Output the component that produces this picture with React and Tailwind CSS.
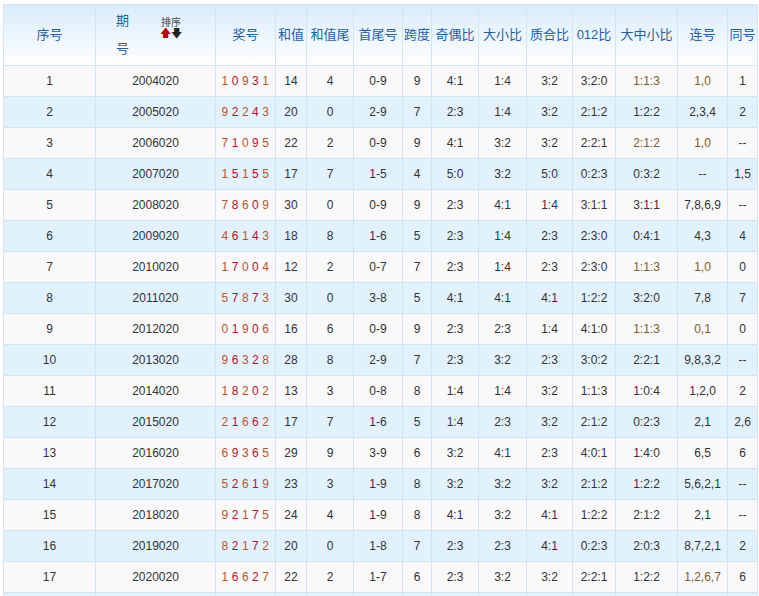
const rows = [
["1","2004020","10931","14","4","0-9","9","4:1","1:4","3:2","3:2:0","1:1:3","1,0","1"],
["2","2005020","92243","20","0","2-9","7","2:3","1:4","3:2","2:1:2","1:2:2","2,3,4","2"],
["3","2006020","71095","22","2","0-9","9","4:1","3:2","3:2","2:2:1","2:1:2","1,0","--"],
["4","2007020","15155","17","7","1-5","4","5:0","3:2","5:0","0:2:3","0:3:2","--","1,5"],
["5","2008020","78609","30","0","0-9","9","2:3","4:1","1:4","3:1:1","3:1:1","7,8,6,9","--"],
["6","2009020","46143","18","8","1-6","5","2:3","1:4","2:3","2:3:0","0:4:1","4,3","4"],
["7","2010020","17004","12","2","0-7","7","2:3","1:4","2:3","2:3:0","1:1:3","1,0","0"],
["8","2011020","57873","30","0","3-8","5","4:1","4:1","4:1","1:2:2","3:2:0","7,8","7"],
["9","2012020","01906","16","6","0-9","9","2:3","2:3","1:4","4:1:0","1:1:3","0,1","0"],
["10","2013020","96328","28","8","2-9","7","2:3","3:2","2:3","3:0:2","2:2:1","9,8,3,2","--"],
["11","2014020","18202","13","3","0-8","8","1:4","1:4","3:2","1:1:3","1:0:4","1,2,0","2"],
["12","2015020","21662","17","7","1-6","5","1:4","2:3","3:2","2:1:2","0:2:3","2,1","2,6"],
["13","2016020","69365","29","9","3-9","6","3:2","4:1","2:3","4:0:1","1:4:0","6,5","6"],
["14","2017020","52619","23","3","1-9","8","3:2","3:2","3:2","2:1:2","1:2:2","5,6,2,1","--"],
["15","2018020","92175","24","4","1-9","8","4:1","3:2","4:1","1:2:2","2:1:2","2,1","--"],
["16","2019020","82172","20","0","1-8","7","2:3","2:3","4:1","0:2:3","2:0:3","8,7,2,1","2"],
["17","2020020","16627","22","2","1-7","6","2:3","3:2","3:2","2:2:1","1:2:2","1,2,6,7","6"],
];
const widths = [92,120,60,31,47,49,29,47,48,46,43,62,50,30];
const heads = ["序号","期号","奖号","和值","和值尾","首尾号","跨度","奇偶比","大小比","质合比","012比","大中小比","连号","同号"];
const brown = {1:[11,12],3:[11,12],7:[11,12],9:[11,12],17:[12]};
export default function App(){
  return (
    <div className="pt-[4px] pl-[3px] bg-white h-[596px] overflow-hidden" style={{fontFamily:'"Liberation Sans","Noto Sans CJK SC",sans-serif'}}>
      <table className="border-collapse text-[12px] text-[#333] table-fixed w-[755px]">
        <colgroup>{widths.map((w,i)=><col key={i} style={{width:w}}/>)}</colgroup>
        <thead>
          <tr className="h-[61px] bg-gradient-to-b from-[#d9ecfb] to-white">
            {heads.map((h,i)=> i===1 ? (
              <th key={i} className="border border-[#d3e3f2] font-normal text-[#1f5fa8] text-[13px] relative">
                <div className="absolute left-[20px] top-[6px] leading-[20px] text-left">期<br/><div className="mt-[8px]">号</div></div>
                <div className="absolute left-[64px] top-[12px] text-[10px] text-[#444] leading-[12px]">排序
                  <div className="flex justify-center text-[11px] leading-[9px]"><span className="text-[#b00]">🡅</span><span className="text-[#222]">🡇</span></div>
                </div>
              </th>
            ) : (
              <th key={i} className="border border-[#d3e3f2] font-normal text-[#1f5fa8] text-[13px] px-0">{h}</th>
            ))}
          </tr>
        </thead>
        <tbody>
          {rows.map((r,ri)=>(
            <tr key={ri} className={"h-[31px] " + (ri%2===0 ? "bg-[#f9f9f9]" : "bg-[#e2f2fd]")}>
              {r.map((c,ci)=>(
                <td key={ci} className={"border border-[#d3e3f2] text-center p-0 " + ((brown[ri+1]||[]).includes(ci) ? "text-[#7a5c2e]" : "")}>
                  {ci===2 ? (
                    <span className="tracking-[3.5px] pl-[3px]">{c.split("").map((d,di)=>(
                      <span key={di} className={di%2===0 ? "text-[#c0521f]" : "text-[#b8102a]"}>{d}</span>
                    ))}</span>
                  ) : c}
                </td>
              ))}
            </tr>
          ))}
          <tr className="h-[31px] bg-[#e2f2fd]">{widths.map((w,i)=><td key={i} className="border border-[#d3e3f2]"></td>)}</tr>
        </tbody>
      </table>
    </div>
  );
}
